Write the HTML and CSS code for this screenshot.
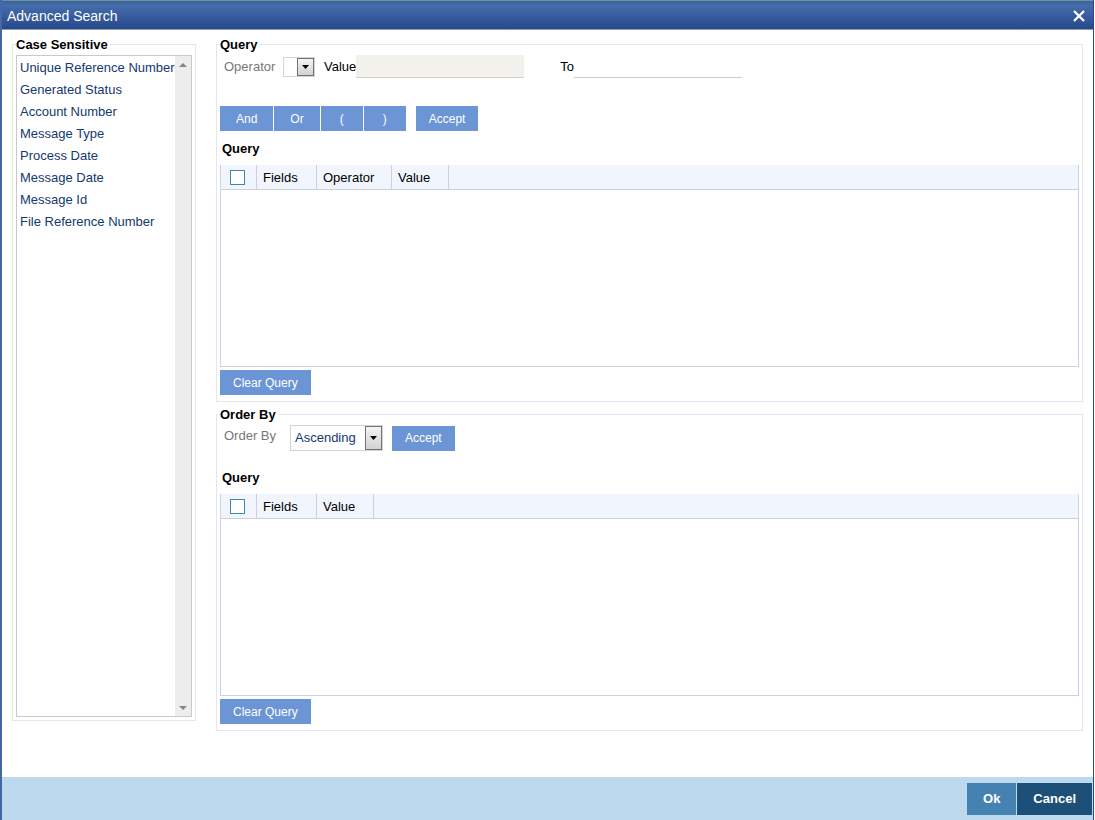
FILE: index.html
```html
<!DOCTYPE html>
<html lang="en">
<head>
<meta charset="utf-8">
<title>Advanced Search</title>
<link rel="stylesheet" href="styles.css">
</head>
<body>
<div class="dialog">
  <header class="titlebar">
    <h1 class="title">Advanced Search</h1>
    <button class="close" type="button" aria-label="Close">
      <svg width="12" height="12" viewBox="0 0 12 12"><path d="M1 1L11 11M11 1L1 11" stroke="#fff" stroke-width="2.2" fill="none"/></svg>
    </button>
  </header>
  <main class="content">
    <fieldset class="group fields">
      <legend>Case Sensitive</legend>
      <div class="listbox">
        <select class="list" size="8" aria-label="Case Sensitive">
          <option>Unique Reference Number</option>
          <option>Generated Status</option>
          <option>Account Number</option>
          <option>Message Type</option>
          <option>Process Date</option>
          <option>Message Date</option>
          <option>Message Id</option>
          <option>File Reference Number</option>
        </select>
        <div class="scrollbar" aria-hidden="true">
          <svg width="8" height="4" viewBox="0 0 8 4"><path d="M0 4L4 0L8 4Z" fill="#868686"/></svg>
          <svg width="8" height="4" viewBox="0 0 8 4"><path d="M0 0L4 4L8 0Z" fill="#868686"/></svg>
        </div>
      </div>
    </fieldset>
    <div class="panels">
      <fieldset class="group">
        <legend>Query</legend>
        <div class="row criteria">
          <label class="caption" for="operator">Operator</label>
          <span class="combo combo-small">
            <select id="operator"><option></option></select>
            <span class="arrow"><svg width="7" height="4" viewBox="0 0 7 4"><path d="M0 0H7L3.500 4Z" fill="#000"/></svg></span>
          </span>
          <label class="value-label" for="value">Value</label>
          <input class="text disabled" id="value" type="text" disabled>
          <label class="to-label" for="to">To</label>
          <input class="text" id="to" type="text">
        </div>
        <div class="row actions">
          <button class="btn wide" type="button">And</button>
          <button class="btn wide" type="button">Or</button>
          <button class="btn paren" type="button">(</button>
          <button class="btn paren" type="button">)</button>
          <button class="btn separate" type="button">Accept</button>
        </div>
        <h2 class="subhead">Query</h2>
        <div class="grid">
          <table>
            <thead><tr>
              <th class="pick"><input type="checkbox" aria-label="Select all query rows"></th>
              <th class="col-fields">Fields</th>
              <th class="col-operator">Operator</th>
              <th class="col-value">Value</th>
              <th class="rest"></th>
            </tr></thead>
          </table>
        </div>
        <button class="btn" type="button">Clear Query</button>
      </fieldset>
      <fieldset class="group">
        <legend>Order By</legend>
        <div class="row ordering">
          <label class="caption" for="order">Order By</label>
          <span class="combo combo-order">
            <select id="order"><option>Ascending</option><option>Descending</option></select>
            <span class="arrow"><svg width="7" height="4" viewBox="0 0 7 4"><path d="M0 0H7L3.500 4Z" fill="#000"/></svg></span>
          </span>
          <button class="btn separate" type="button">Accept</button>
        </div>
        <h2 class="subhead">Query</h2>
        <div class="grid">
          <table>
            <thead><tr>
              <th class="pick"><input type="checkbox" aria-label="Select all order rows"></th>
              <th class="col-fields">Fields</th>
              <th class="col-value">Value</th>
              <th class="rest"></th>
            </tr></thead>
          </table>
        </div>
        <button class="btn" type="button">Clear Query</button>
      </fieldset>
    </div>
  </main>
  <footer class="footer">
    <button class="ok" type="button">Ok</button>
    <button class="cancel" type="button">Cancel</button>
  </footer>
</div>
</body>
</html>
```

FILE: styles.css
```css
* { box-sizing: border-box; }

body {
  margin: 0;
  font: 13px/16px "Liberation Sans", Arial, sans-serif;
  color: #000;
  background: #fff;
}

button, input, select { font: inherit; margin: 0; border-radius: 0; }

.dialog {
  min-height: 100vh;
  display: flex;
  flex-direction: column;
  border-left: 2px solid #4467a8;
  border-right: 1px solid #23499a;
  margin-right: 1px;
}

.titlebar {
  height: 30px;
  display: flex;
  align-items: center;
  justify-content: space-between;
  padding: 2px 8px 0 5px;
  border-top: 1px solid #6f958f;
  border-bottom: 1px solid #8a9fc8;
  background: linear-gradient(#3a609f, #456dab 15%, #26498a);
}

.title { margin: 0; font-size: 14px; font-weight: normal; color: #fff; }

.close {
  display: flex;
  padding: 0;
  border: 0;
  background: none;
}

.content {
  flex: 1;
  display: flex;
  align-items: flex-start;
  gap: 20px;
  padding: 5px 10px 44px;
}

.group {
  min-width: 0;
  margin: 0;
  padding: 2px 3px 6px;
  border: 1px solid #e3e5f3;
}

.group legend { padding: 2px 2px 0 0; font-weight: bold; }

.fields { flex: 0 0 184px; padding-bottom: 3px; }

.listbox {
  display: flex;
  min-height: 662px;
  border: 1px solid #c9c9c9;
}

.list {
  flex: 1;
  min-width: 0;
  padding: 1px 0;
  border: 0;
  outline: 0;
  overflow: hidden;
  color: #13396f;
  background: #fff;
}

.list option { padding: 3px 0 3px 3px; line-height: 16px; min-height: 22px; }

.scrollbar {
  flex: 0 0 16px;
  display: flex;
  flex-direction: column;
  justify-content: space-between;
  align-items: center;
  padding: 7px 0 6px;
  background: #ededed;
}

.panels {
  flex: 1;
  min-width: 0;
  display: flex;
  flex-direction: column;
  gap: 3px;
}

.row { display: flex; align-items: center; }

.criteria { height: 23px; margin-bottom: 28px; }
.ordering { height: 26px; margin-bottom: 19px; }

.caption { color: #777; padding-left: 4px; }
.criteria .caption { flex: 0 0 63px; }
.ordering .caption { flex: 0 0 70px; align-self: flex-start; padding-top: 3px; }
.value-label { margin-left: 9px; }
.to-label { margin-left: 36px; }

.combo { position: relative; display: flex; border: 1px solid #d3d3d3; }

.combo select {
  width: 100%;
  padding: 0 0 0 4px;
  border: 0;
  appearance: none;
  color: #13396f;
  background: #fff;
}

.combo-small { width: 32px; height: 20px; }
.combo-order { width: 93px; height: 26px; }

.arrow {
  position: absolute;
  top: 0;
  right: 0;
  bottom: 0;
  width: 17px;
  display: flex;
  align-items: center;
  justify-content: center;
  border: 1px solid #737373;
  background: linear-gradient(#f4f4f4, #d2d2d2);
  pointer-events: none;
}

.text {
  width: 168px;
  height: 23px;
  padding: 0 4px;
  border: 0;
  border-bottom: 1px solid #cfcfcf;
  background: #fff;
}

.text.disabled { background: #f2f1eb; }

.actions { gap: 1px; margin-bottom: 10px; }

.btn {
  display: block;
  height: 25px;
  padding: 0 13px;
  border: 0;
  font-size: 12px;
  color: #fff;
  background: #6b95d5;
}

.btn.wide { padding: 0 16px; }
.btn.paren { min-width: 42px; }
.btn.separate { margin-left: 9px; }

.subhead { margin: 0 0 8px; padding-left: 2px; font-size: 13px; }

.grid {
  min-height: 202px;
  margin-bottom: 3px;
  border: 1px solid #cbd3e2;
  border-top: 0;
}

.grid table { width: 100%; border-spacing: 0; table-layout: fixed; }

.grid th {
  height: 25px;
  padding: 2px 0 0 6px;
  border-right: 1px solid #cbd0da;
  border-bottom: 1px solid #cbd0da;
  font-weight: normal;
  text-align: left;
  background: #f0f5fe;
}

.grid .pick { width: 36px; padding: 0 0 0 9px; }
.grid .rest { border-right: 0; }
.grid .col-fields { width: 60px; }
.grid .col-operator { width: 75px; }
.grid .col-value { width: 57px; }

.pick input {
  display: block;
  width: 15px;
  height: 15px;
  appearance: none;
  border: 1px solid #3f85b5;
  background: #fff;
}

.footer {
  display: flex;
  justify-content: flex-end;
  gap: 1px;
  padding: 6px 1px 5px;
  background: #bdd9ed;
}

.footer button {
  height: 32px;
  padding: 0 16px;
  border: 0;
  font-weight: bold;
  color: #fff;
}

.ok { background: #4682b1; }
.cancel { background: #1d5078; }
```
